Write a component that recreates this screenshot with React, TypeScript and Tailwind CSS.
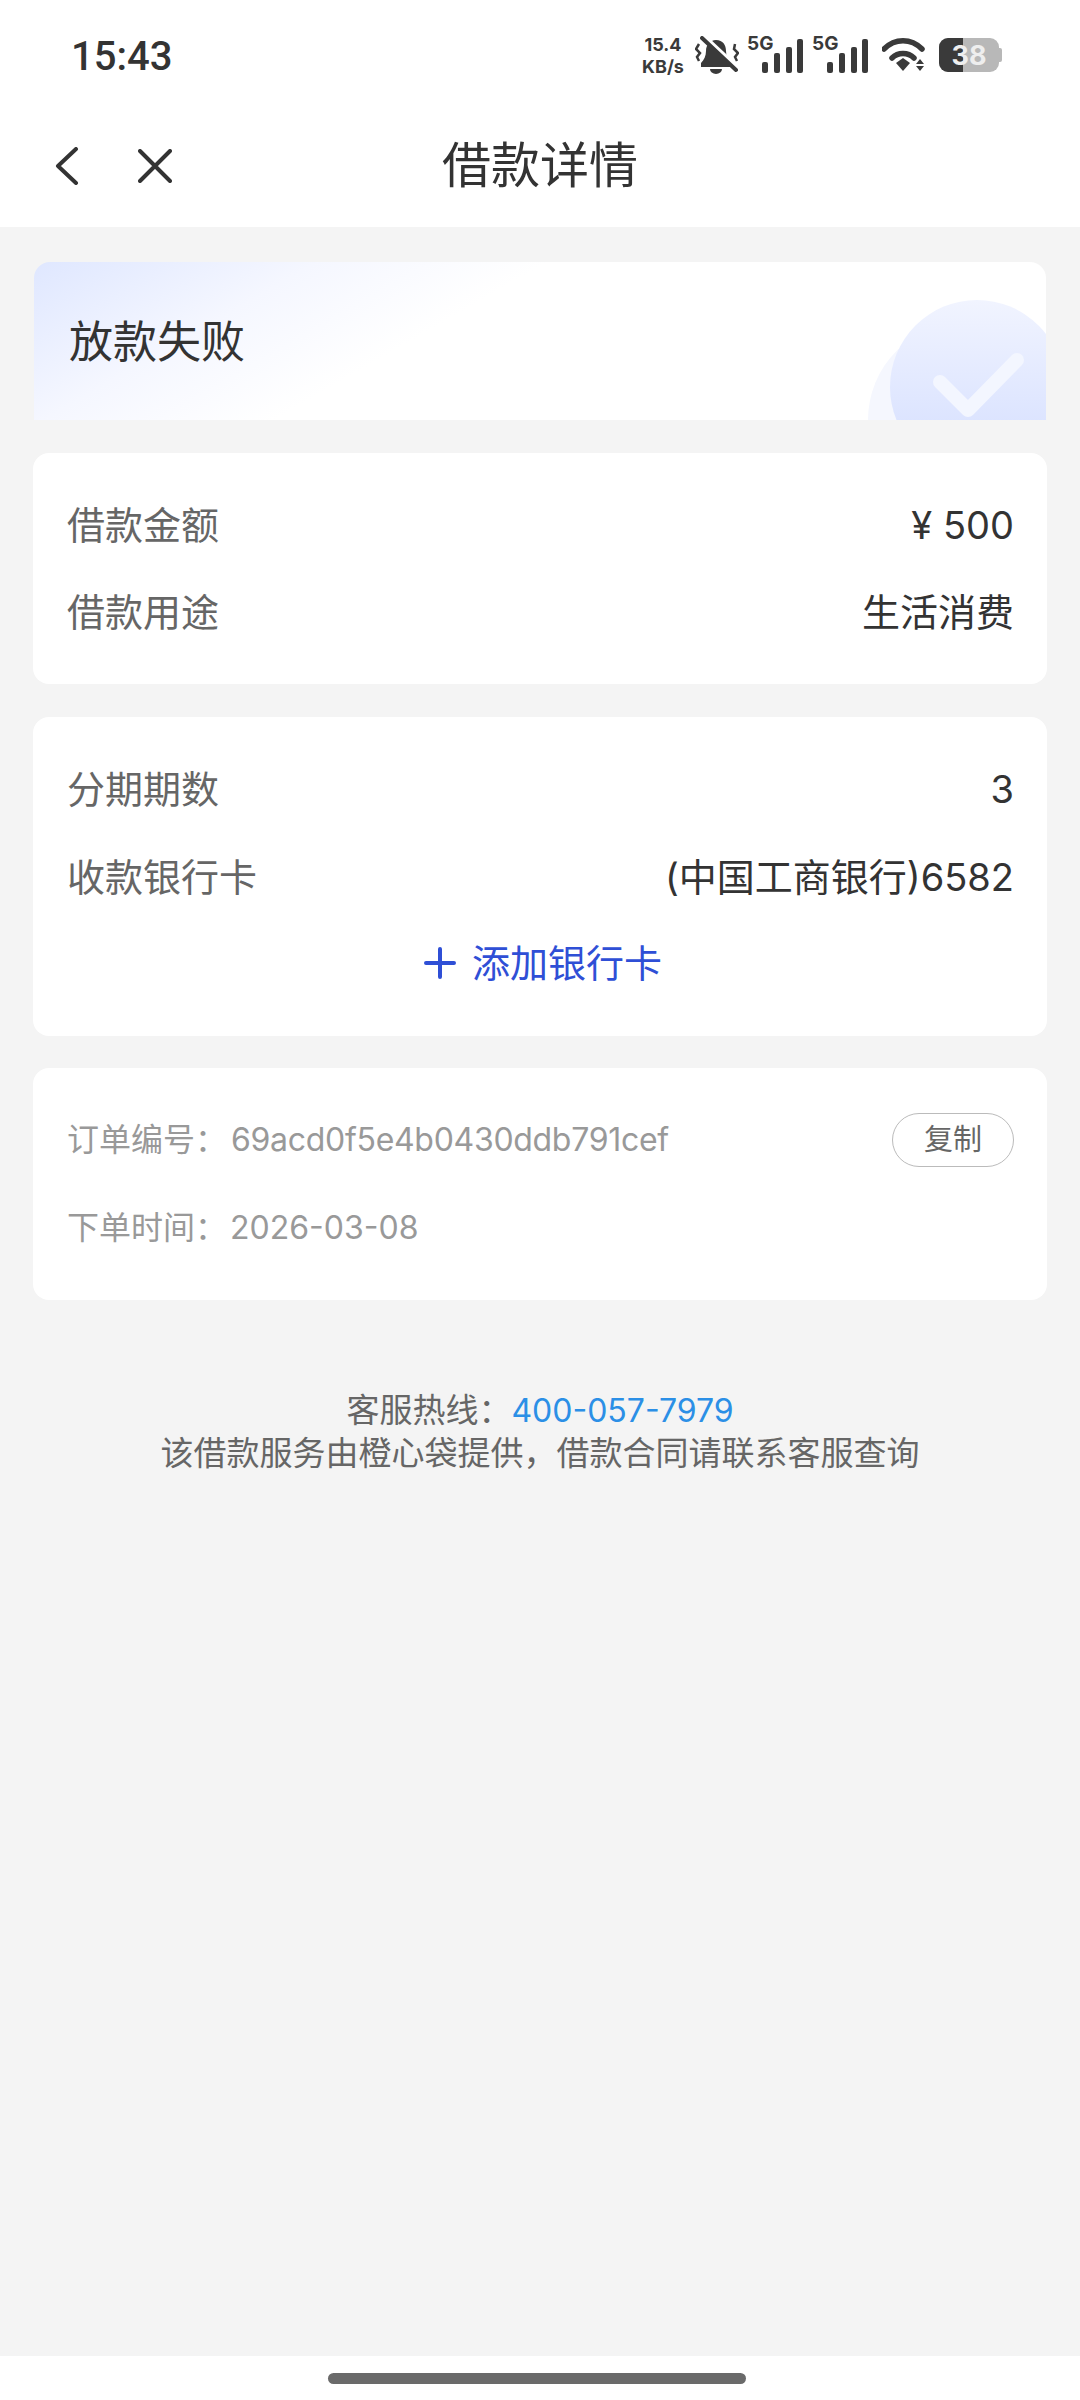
import { ReactNode } from "react";

const FONT = "font-['Inter','Noto_Sans_CJK_SC',sans-serif]";

const Signal = () => (
  <svg width="42" height="34" viewBox="0 0 42 34" className="absolute left-[15px] top-[3px]" fill="#3a3a3a">
    <rect x="0" y="23" width="6" height="11" rx="2" />
    <rect x="12" y="14" width="6" height="20" rx="2" />
    <rect x="24" y="8" width="6" height="26" rx="2" />
    <rect x="35" y="0" width="6" height="34" rx="2" />
  </svg>
);

const StatusBar = () => (
  <div className="h-[110px] flex items-center justify-between pl-[71px] pr-[78px]">
    <span className="text-[40px] font-medium text-[#333] font-['Roboto',sans-serif] mt-[4px]">15:43</span>
    <div className="flex items-center h-[40px]">
      <div className="w-[46px] flex flex-col items-center text-[#3a3a3a] font-bold text-[18px] leading-[22px] mt-[1px]">
        <span>15.4</span>
        <span>KB/s</span>
      </div>
      {/* muted bell */}
      <svg width="44" height="38" viewBox="0 0 44 38" className="ml-[9px]" fill="#3a3a3a">
        <path d="M21 4c7 0 10 5 10 11 0 5 2 9 5 12v4H6v-4c3-3 5-7 5-12 0-6 4-11 10-11z" />
        <path d="M15 33h12a6 5 0 0 1-12 0z" />
        <path d="M9 0l33 31" stroke="#fff" strokeWidth="4" />
        <path d="M7 2l34 32" stroke="#3a3a3a" strokeWidth="4" strokeLinecap="round" />
        <path d="M4 8L1 13l4 4-3 4 2 4M40 8l-1 5 4 4-3 4 2 4" stroke="#3a3a3a" strokeWidth="2.5" fill="none" />
      </svg>
      <div className="relative w-[57px] h-[38px] ml-[8px] text-[#3a3a3a] font-bold text-[19px] leading-[16px]">
        <span>5G</span>
        <Signal />
      </div>
      <div className="relative w-[57px] h-[38px] ml-[8px] text-[#3a3a3a] font-bold text-[19px] leading-[16px]">
        <span>5G</span>
        <Signal />
      </div>
      {/* wifi */}
      <svg width="46" height="34" viewBox="0 0 46 34" className="ml-[13px]" fill="none">
        <path d="M2 11c11-11 27-11 38 0" stroke="#3a3a3a" strokeWidth="5.5" strokeLinecap="round" />
        <path d="M10 20c6-6 16-6 22 0" stroke="#3a3a3a" strokeWidth="5.5" strokeLinecap="round" />
        <path d="M14 25l7-5 7 5-7 8z" fill="#3a3a3a" />
        <path d="M38 21l4 5h-8zM38 33l4-5h-8z" fill="#3a3a3a" />
      </svg>
      {/* battery */}
      <div className="ml-[11px] flex items-center">
        <div className="relative w-[60px] h-[34px] rounded-[9px] bg-[#b8b8b8] overflow-hidden flex items-center justify-center">
          <div className="absolute left-0 top-0 bottom-0 w-[24px] bg-[#3a3a3a]" />
          <span className="relative text-[#eee] font-bold text-[27px] leading-none">38</span>
        </div>
        <div className="w-[3px] h-[14px] bg-[#b8b8b8] rounded-r-[2px]" />
      </div>
    </div>
  </div>
);

const NavBar = () => (
  <div className="h-[117px] grid grid-cols-[1fr_auto_1fr] items-center pb-[6px]">
    <div className="flex items-center pl-[55px] gap-[59px]">
      <svg width="24" height="38" viewBox="0 0 24 38" fill="none" stroke="#333" strokeWidth="4" strokeLinecap="round" strokeLinejoin="round">
        <path d="M21 2L3 19l18 17" />
      </svg>
      <svg width="34" height="34" viewBox="0 0 34 34" fill="none" stroke="#333" strokeWidth="4" strokeLinecap="round">
        <path d="M2 2l30 30M32 2L2 32" />
      </svg>
    </div>
    <div className="text-[49px] text-[#333]">借款详情</div>
    <div />
  </div>
);

const Row = ({ label, value, className }: { label: string; value: ReactNode; className?: string }) => (
  <div className={`flex items-center justify-between text-[38px] leading-[58px] ${className ?? ""}`}>
    <span className="text-[#666]">{label}</span>
    <span className="text-[#333]">{value}</span>
  </div>
);

const Card = ({ children, className }: { children: ReactNode; className?: string }) => (
  <div className={`mx-[33px] rounded-[16px] bg-white pl-[34px] pr-[33px] ${className ?? ""}`}>{children}</div>
);

export default function App() {
  return (
    <div className={`w-[1080px] h-[2400px] flex flex-col bg-[#f4f4f4] ${FONT}`}>
      <div className="h-[227px] bg-white shrink-0">
        <StatusBar />
        <NavBar />
      </div>

      {/* status banner */}
      <div className="relative mt-[35px] mx-[34px] h-[158px] overflow-hidden rounded-t-[16px] bg-[linear-gradient(150deg,#dfe7ff_0%,#f5f7ff_22%,#ffffff_40%)] pl-[35px] flex items-start shrink-0">
        <span className="mt-[49px] text-[44px] leading-[62px] text-[#333]">放款失败</span>
        <svg width="180" height="120" viewBox="0 0 180 120" className="absolute right-0 bottom-0">
          <defs>
            <linearGradient id="disc" x1="0" y1="0" x2="0" y2="1">
              <stop offset="0" stopColor="#f1f4ff" />
              <stop offset="0.7" stopColor="#dce4ff" />
            </linearGradient>
          </defs>
          <circle cx="100" cy="120" r="98" fill="#f5f7fe" />
          <circle cx="111" cy="87" r="87" fill="url(#disc)" />
          <path d="M74 82l28 28 49-50" fill="none" stroke="#f3f6ff" strokeWidth="14" strokeLinecap="round" strokeLinejoin="round" />
        </svg>
      </div>

      <Card className="mt-[33px] h-[231px] pt-[43px] shrink-0">
        <Row label="借款金额" value="¥ 500" />
        <Row label="借款用途" value="生活消费" className="mt-[29px]" />
      </Card>

      <Card className="mt-[33px] h-[319px] pt-[43px] shrink-0">
        <Row label="分期期数" value="3" />
        <Row label="收款银行卡" value="(中国工商银行)6582" className="mt-[30px]" />
        <div className="mt-[28px] pl-[5px] flex items-center justify-center text-[38px] leading-[58px] text-[#2f4fd6]">
          <svg width="32" height="32" viewBox="0 0 32 32" className="mr-[16px]" fill="none" stroke="#2f4fd6" strokeWidth="4" strokeLinecap="round">
            <path d="M16 2v28M2 16h28" />
          </svg>
          添加银行卡
        </div>
      </Card>

      <Card className="mt-[32px] h-[232px] pt-[45px] text-[32px] leading-[54px] text-[#999] shrink-0">
        <div className="flex items-center justify-between">
          <span>
            订单编号：<span className="ml-[4px] tracking-[-0.3px]">69acd0f5e4b0430ddb791cef</span>
          </span>
          <span className="w-[122px] h-[54px] rounded-full border border-[#bbb] flex items-center justify-center text-[29px] text-[#666]">复制</span>
        </div>
        <div className="mt-[34px]">
          下单时间：<span className="ml-[3px]">2026-03-08</span>
        </div>
      </Card>

      <div className="mt-[89px] flex flex-col items-center text-[33px] leading-[42px] text-[#666] shrink-0">
        <div>
          客服热线：<span className="text-[32px] text-[#2b8fe6]">400-057-7979</span>
        </div>
        <div>该借款服务由橙心袋提供，借款合同请联系客服查询</div>
      </div>

      <div className="mt-auto h-[44px] bg-white flex items-start justify-center pt-[17px] pr-[7px] shrink-0">
        <div className="w-[418px] h-[11px] rounded-full bg-[#6a6a6a]" />
      </div>
    </div>
  );
}
